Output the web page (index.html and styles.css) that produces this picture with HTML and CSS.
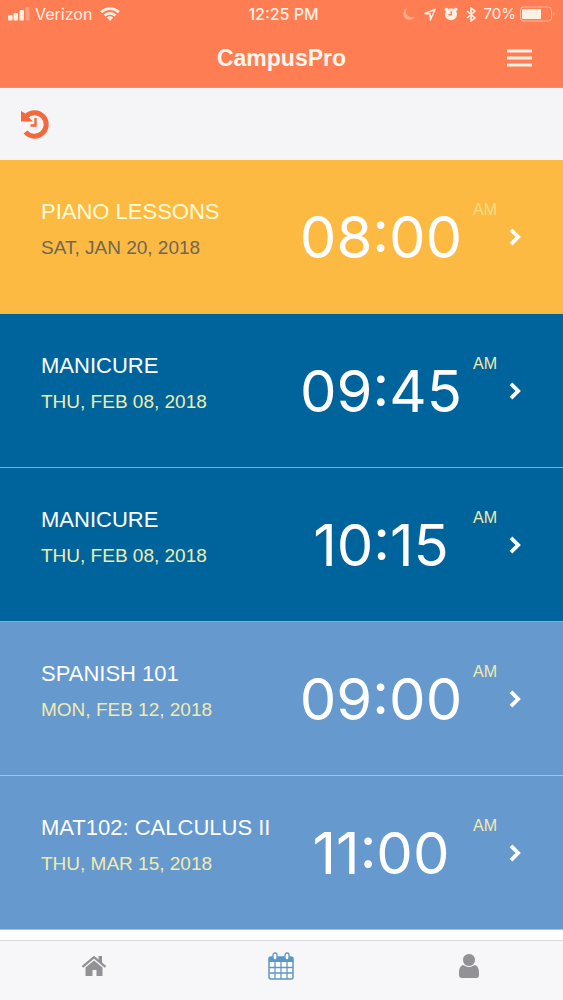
FILE: index.html
```html
<!DOCTYPE html>
<html lang="en">
<head>
<meta charset="utf-8">
<meta name="viewport" content="width=device-width, initial-scale=1">
<title>CampusPro</title>
<link rel="stylesheet" href="styles.css">
</head>
<body>
<svg class="defs" aria-hidden="true">
  <symbol id="chevron" viewBox="0 0 12 18"><path d="M2 1.800L9.200 9 2 16.200" fill="none" stroke="currentColor" stroke-width="3.800"/></symbol>
</svg>
<div class="app">
  <header class="header">
    <div class="status">
      <div class="status-left">
        <svg width="22" height="14" viewBox="0 0 22 14" fill="currentColor" aria-hidden="true"><rect x="0" y="8" width="4.500" height="5.500" rx="1"/><rect x="5.500" y="6" width="4.500" height="7.500" rx="1"/><rect x="11.500" y="3" width="4.500" height="10.500" rx="1"/><rect x="17.500" y="0" width="4" height="13.500" rx="1" opacity=".3"/></svg>
        <span class="carrier">Verizon</span>
        <svg class="wifi" width="20" height="14" viewBox="0 0 20 14" aria-hidden="true"><g fill="none" stroke="currentColor" stroke-width="2.800"><path d="M1.200 5.200a12.500 12.500 0 0 1 17.600 0"/><path d="M4.500 8.600a7.800 7.800 0 0 1 11 0"/></g><path d="M6.800 10.600a4.500 4.500 0 0 1 6.400 0L10 14z" fill="currentColor"/></svg>
      </div>
      <span class="clock">12:25 PM</span>
      <div class="status-right">
        <svg width="12" height="12" viewBox="0 0 12 12" opacity=".4" aria-hidden="true"><path d="M4 0a6.200 6.200 0 1 0 8 8.500A6 6 0 0 1 4 0z" fill="currentColor"/></svg>
        <svg width="13" height="13" viewBox="0 0 13 13" aria-hidden="true"><path d="M1.500 5.600L12 1.500 7.500 11.500l-.5-5.500z" fill="none" stroke="currentColor" stroke-width="1.500"/></svg>
        <svg width="14" height="14" viewBox="0 0 14 14" aria-hidden="true"><g fill="currentColor"><circle cx="7" cy="7.300" r="6"/><circle cx="2.300" cy="2.500" r="1.800"/><circle cx="11.700" cy="2.500" r="1.800"/></g><path d="M7.200 4v3.800H4.500" class="cutout"/></svg>
        <svg width="10" height="15" viewBox="0 0 10 15" aria-hidden="true"><path d="M1 4l8 7-4 3V1l4 3-8 7" fill="none" stroke="currentColor" stroke-width="1.600"/></svg>
        <span class="percent">70%</span>
        <svg class="battery" width="35" height="16" viewBox="0 0 35 16" aria-hidden="true"><rect x=".5" y="1" width="31" height="14" rx="3" fill="none" stroke="currentColor" opacity=".5"/><rect x="2" y="3" width="19" height="10" rx="1" fill="currentColor"/><path d="M33.500 5.500q2 2.500 0 5z" fill="currentColor" opacity=".5"/></svg>
      </div>
    </div>
    <div class="nav">
      <h1 class="title">CampusPro</h1>
      <button class="menu" type="button" aria-label="Menu"><svg width="25" height="18" viewBox="0 0 25 18" aria-hidden="true"><path d="M0 2h25M0 9h25M0 16h25" stroke="currentColor" stroke-width="2.800"/></svg></button>
    </div>
  </header>
  <div class="toolbar">
    <button class="history" type="button" aria-label="History"><svg width="30" height="30" viewBox="0 0 30 30" aria-hidden="true"><path d="M6 7.500A11.700 11.700 0 1 1 5.500 23" fill="none" stroke="currentColor" stroke-width="5"/><path d="M1 2l3.500 2L13 12.500H1z" fill="currentColor"/><path d="M15.500 9v7.500H10.500" fill="none" stroke="currentColor" stroke-width="2.400"/></svg></button>
  </div>
  <main class="list">
    <a class="row amber" href="#piano">
      <div class="info"><h2 class="name">PIANO LESSONS</h2><p class="date">SAT, JAN 20, 2018</p></div>
      <span class="time">08:00</span><span class="period">AM</span><svg class="chevron" aria-hidden="true"><use href="#chevron"/></svg>
    </a>
    <a class="row navy" href="#manicure-1">
      <div class="info"><h2 class="name">MANICURE</h2><p class="date">THU, FEB 08, 2018</p></div>
      <span class="time">09:45</span><span class="period">AM</span><svg class="chevron" aria-hidden="true"><use href="#chevron"/></svg>
    </a>
    <a class="row navy" href="#manicure-2">
      <div class="info"><h2 class="name">MANICURE</h2><p class="date">THU, FEB 08, 2018</p></div>
      <span class="time">10:15</span><span class="period">AM</span><svg class="chevron" aria-hidden="true"><use href="#chevron"/></svg>
    </a>
    <a class="row sky" href="#spanish">
      <div class="info"><h2 class="name">SPANISH 101</h2><p class="date">MON, FEB 12, 2018</p></div>
      <span class="time">09:00</span><span class="period">AM</span><svg class="chevron" aria-hidden="true"><use href="#chevron"/></svg>
    </a>
    <a class="row sky" href="#calculus">
      <div class="info"><h2 class="name">MAT102: CALCULUS II</h2><p class="date">THU, MAR 15, 2018</p></div>
      <span class="time">11:00</span><span class="period">AM</span><svg class="chevron" aria-hidden="true"><use href="#chevron"/></svg>
    </a>
  </main>
  <nav class="tabs">
    <a class="tab" href="#home" aria-label="Home"><svg width="26" height="22" viewBox="0 0 26 22" aria-hidden="true"><path d="M1.500 11.800L13 2.200l11.500 9.600" fill="none" stroke="currentColor" stroke-width="2.400"/><path d="M17.500 1H21v7l-3.500-3zM13 5.500l8.500 7V21h-6v-6h-4v6h-7v-8.500z" fill="currentColor"/></svg></a>
    <a class="tab active" href="#calendar" aria-label="Calendar"><svg width="28" height="28" viewBox="0 0 28 28" aria-hidden="true"><rect x="2" y="5" width="24" height="22" rx="2" fill="#fff" stroke="currentColor" stroke-width="1.500"/><path d="M2 5h24v5H2z" fill="currentColor"/><path d="M2 15.500h24M2 21h24M8 10v17M14 10v17M20 10v17" stroke="currentColor" stroke-width="1.300"/><rect x="6" y="1" width="4" height="7" rx="2" fill="#fff" stroke="currentColor" stroke-width="1.300"/><rect x="18" y="1" width="4" height="7" rx="2" fill="#fff" stroke="currentColor" stroke-width="1.300"/></svg></a>
    <a class="tab" href="#profile" aria-label="Profile"><svg width="22" height="26" viewBox="0 0 22 26" fill="currentColor" aria-hidden="true"><path d="M5 12C2 13 1 16 1 20v2q0 3 3 3h14q3 0 3-3v-2c0-4-1-7-4-8q-6 3.500-12 0z"/><circle cx="11" cy="7" r="6.500" class="head"/></svg></a>
  </nav>
</div>
</body>
</html>
```
FILE: styles.css
```css
* { box-sizing: border-box; }
body { margin: 0; background: #fff; font-family: "Liberation Sans", Arial, sans-serif; }
h1, h2, p { margin: 0; font-weight: 400; }
svg { display: block; flex: none; }
button { border: 0; padding: 0; background: none; color: inherit; cursor: pointer; }
a { color: inherit; text-decoration: none; }
.defs { display: none; }
.app { min-height: 100vh; display: flex; flex-direction: column; }

.header { background: #ff7d52; color: #fff0e4; border-bottom: 1px solid #e8927a; }
.status { height: 28px; display: grid; grid-template-columns: 1fr auto 1fr; align-items: center; padding: 0 8px; font: 16px/20px Inter, sans-serif; }
.status-left, .status-right { display: flex; align-items: center; }
.status-left { gap: 5px; }
.wifi { margin-left: 3px; }
.status-right { justify-content: flex-end; gap: 8px; }
.clock { font-weight: 500; padding-left: 4px; }
.percent { font-size: 15px; }
.battery { margin-left: -4px; }
.cutout { fill: none; stroke: #ff7d52; stroke-width: 1.4; }
.nav { height: 59px; display: grid; grid-template-columns: 1fr auto 1fr; align-items: center; padding: 0 31px; }
.title { grid-column: 2; font-size: 23px; line-height: 28px; font-weight: 700; color: #fff6ec; }
.menu { justify-self: end; }

.toolbar { height: 72px; padding: 0 20px; display: flex; align-items: center; background: #f5f5f7; color: #f4693c; }

.row { height: 154px; display: grid; grid-template-columns: 1fr 160px 24px 12px; column-gap: 12px; padding: 38px 42px 0 41px; border-bottom: 1px solid #86abd2; color: #fff; }
.amber { background: #fdba42; border-color: #c9c08a; }
.navy { background: #00649c; }
.sky { background: #6699cd; border-color: #a5c3e4; }
.name { font-size: 22px; line-height: 28px; white-space: nowrap; }
.date { margin-top: 8px; font-size: 19px; line-height: 28px; color: #f0ebae; }
.amber .name { color: #fffbd8; }
.amber .date { color: #6f6656; }
.time { font: 400 58px/78px Inter, sans-serif; text-align: center; white-space: nowrap; justify-self: center; }
.period { font-size: 16px; line-height: 24px; color: #f0ebae; justify-self: end; }
.amber .period { color: #f4dc85; }
.chevron { width: 12px; height: 18px; margin-top: 30px; }

.tabs { margin-top: auto; height: 60px; display: grid; grid-template-columns: repeat(3, 1fr); border-top: 1px solid #d8d8dc; background: #f7f6f9; color: #929196; }
.tab { display: flex; justify-content: center; align-items: center; padding-bottom: 10px; }
.active { color: #5d97c6; }
.head { stroke: #f7f6f9; stroke-width: 1; }
```
